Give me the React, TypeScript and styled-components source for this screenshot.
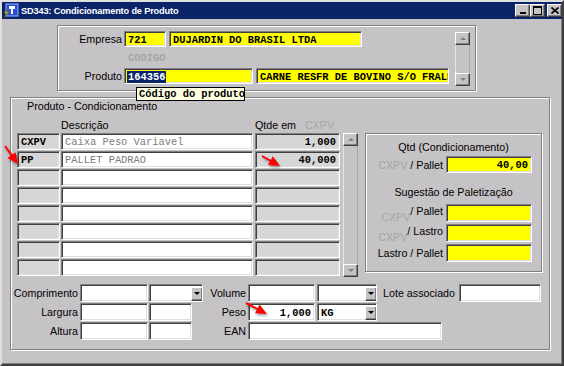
import styled, { createGlobalStyle } from 'styled-components';

const MONO = `"Liberation Mono", "DejaVu Sans Mono", monospace`;
const FACE = '#c6c3c6';

const GlobalStyle = createGlobalStyle`
  html, body { margin: 0; padding: 0; background: ${FACE}; }
  body { font-family: "Liberation Sans", Arial, sans-serif; font-size: 10.7px; color: #000; }
  * { box-sizing: border-box; }
`;

const Window = styled.div`
  width: 564px;
  height: 366px;
  background: ${FACE};
  border: 2px solid;
  border-color: #dfdfdf #404040 #404040 #dfdfdf;
  box-shadow: inset -1px -1px 0 #808080;
  display: flex;
  flex-direction: column;
  position: relative;
  overflow: hidden;
`;

const TitleBar = styled.div`
  height: 17px;
  background: #0a246a;
  color: #fff;
  display: flex;
  align-items: center;
  padding: 0 0 0 1px;
  font-weight: bold;
  font-size: 9.2px;
  letter-spacing: -0.15px;
`;

const TitleText = styled.span`
  margin-left: 2px;
  flex: 1;
  white-space: nowrap;
`;

const CaptionBtn = styled.div<{ $gap?: number }>`
  width: 15px;
  height: 13px;
  margin-left: ${p => p.$gap ?? 0}px;
  background: ${FACE};
  border: 1px solid;
  border-color: #fff #404040 #404040 #fff;
  box-shadow: inset -1px -1px 0 #808080;
  display: flex;
  align-items: center;
  justify-content: center;
`;

const Body = styled.div`
  flex: 1;
  padding-top: 6px;
`;

const etched = `
  border: 1px solid #808080;
  box-shadow: inset 1px 1px 0 #fff, 1px 1px 0 #fff;
`;

const TopPanel = styled.div`
  position: relative;
  margin-left: 55px;
  width: 419px;
  height: 66px;
  ${etched}
  display: flex;
  padding-top: 5px;
`;

const TopGrid = styled.div`
  width: 391px;
  display: flex;
  flex-direction: column;
`;

const FormRow = styled.div<{ $h: number }>`
  display: flex;
  align-items: center;
  height: ${p => p.$h}px;
`;

const Label = styled.span<{ $w: number; $pr?: number; $align?: string }>`
  width: ${p => p.$w}px;
  padding-right: ${p => p.$pr ?? 2}px;
  text-align: ${p => p.$align ?? 'right'};
  white-space: nowrap;
`;

const Hint = styled.span<{ $ml: number }>`
  margin-left: ${p => p.$ml}px;
  font-family: ${MONO};
  font-weight: bold;
  font-size: 10.4px;
  color: #a5a5a5;
`;

const Field = styled.div<{ $w: number; $h?: number; $bg?: string; $right?: boolean; $muted?: boolean; $ml?: number }>`
  width: ${p => p.$w}px;
  height: ${p => (p.$h ? `${p.$h}px` : '100%')};
  margin-left: ${p => p.$ml ?? 0}px;
  background: ${p => p.$bg ?? '#fff'};
  border: 1px solid;
  border-color: #808080 #fff #fff #808080;
  box-shadow: inset 1px 1px 0 #404040, inset -1px -1px 0 #dfdfdf;
  display: flex;
  align-items: center;
  justify-content: ${p => (p.$right ? 'flex-end' : 'flex-start')};
  padding: 1px 3px 0 3px;
  font-family: ${MONO};
  font-weight: ${p => (p.$muted ? 'normal' : 'bold')};
  font-size: 10.4px;
  color: ${p => (p.$muted ? '#7b7b7b' : '#000')};
  white-space: nowrap;
  overflow: hidden;
`;

const Selected = styled.span`
  background: #0a246a;
  color: #fff;
  margin-left: -1px;
  padding: 0 1px;
`;

const Tooltip = styled.div`
  position: absolute;
  left: 78px;
  top: 61px;
  width: 109px;
  height: 14px;
  background: #ffffe1;
  border: 1px solid #000;
  font-family: ${MONO};
  font-weight: bold;
  font-size: 10.4px;
  line-height: 12px;
  padding-left: 2px;
  white-space: nowrap;
  z-index: 2;
`;

const VScroll = styled.div<{ $h: number; $ml: number; $mt?: number }>`
  width: 15px;
  height: ${p => p.$h}px;
  margin-left: ${p => p.$ml}px;
  margin-top: ${p => p.$mt ?? 0}px;
  display: flex;
  flex-direction: column;
  justify-content: space-between;
  border-left: 1px solid #e6e6e6;
  border-right: 1px solid #a8a8a8;
`;

const ScrollBtn = styled.div`
  width: 15px;
  height: 13px;
  margin-left: -1px;
  background: ${FACE};
  border: 1px solid;
  border-color: #fff #404040 #404040 #fff;
  box-shadow: inset -1px -1px 0 #808080;
  display: flex;
  align-items: center;
  justify-content: center;
`;

const Tri = styled.span<{ $up?: boolean; $c: string; $s?: number }>`
  width: 0;
  height: 0;
  border-left: ${p => p.$s ?? 3}px solid transparent;
  border-right: ${p => p.$s ?? 3}px solid transparent;
  ${p =>
    p.$up
      ? `border-bottom: ${p.$s ?? 3}px solid ${p.$c};`
      : `border-top: ${p.$s ?? 3}px solid ${p.$c};`}
`;

const LowerPanel = styled.div`
  margin: 6px 0 0 8px;
  width: 540px;
  height: 253px;
  ${etched}
`;

const PanelCaption = styled.div`
  margin-top: 1px;
  padding-left: 16px;
  height: 14px;
  line-height: 14px;
`;

const Middle = styled.div`
  display: flex;
  margin-top: 5px;
  padding-left: 6px;
`;

const TableBlock = styled.div`
  display: flex;
  flex-direction: column;
`;

const Header = styled.div`
  height: 15px;
  display: flex;
  align-items: flex-start;
  line-height: 14px;
`;

const HeadCell = styled.span<{ $w: number; $ml: number }>`
  width: ${p => p.$w}px;
  margin-left: ${p => p.$ml}px;
  white-space: nowrap;
`;

const Dim = styled.span`
  color: #a5a5a5;
`;

const TableBody = styled.div`
  display: flex;
`;

const Rows = styled.div`
  display: flex;
  flex-direction: column;
  gap: 1px;
`;

const TableRow = styled.div`
  display: flex;
  height: 17px;
`;

const RightBox = styled.div`
  margin: 15px 0 0 7px;
  width: 177px;
  height: 139px;
  ${etched}
  display: flex;
  flex-direction: column;
  align-items: center;
`;

const BoxTitle = styled.div<{ $mt: number }>`
  margin-top: ${p => p.$mt}px;
  height: 14px;
  line-height: 14px;
  white-space: nowrap;
`;

const BoxRow = styled.div<{ $mt: number; $h: number }>`
  align-self: stretch;
  display: flex;
  height: ${p => p.$h}px;
  margin-top: ${p => p.$mt}px;
`;

const BoxLabel = styled.div<{ $low?: boolean }>`
  width: 80px;
  padding-right: 3px;
  display: flex;
  justify-content: flex-end;
  align-items: ${p => (p.$low ? 'flex-start' : 'center')};
  padding-top: ${p => (p.$low ? 1 : 0)}px;
  white-space: nowrap;
`;

const SubDim = styled.span<{ $drop: number }>`
  color: #a5a5a5;
  position: relative;
  top: ${p => p.$drop}px;
`;

const BottomForm = styled.div`
  margin-top: 7px;
  display: grid;
  grid-template-columns: 69px 68px 1px 54px 45px 67px 2px 60px 82px 82px;
  grid-template-rows: repeat(3, 18px);
  row-gap: 1px;
`;

const Cell = styled.div<{ $col: string; $start?: boolean }>`
  grid-column: ${p => p.$col};
  display: flex;
  align-items: center;
  justify-content: ${p => (p.$start ? 'flex-start' : 'flex-end')};
`;

const DropBtn = styled.div`
  margin-left: auto;
  margin-right: -2px;
  width: 12px;
  height: 14px;
  flex: none;
  background: ${FACE};
  border: 1px solid;
  border-color: #fff #404040 #404040 #fff;
  box-shadow: inset -1px -1px 0 #808080;
  display: flex;
  align-items: center;
  justify-content: center;
`;

const Overlay = styled.svg`
  position: absolute;
  left: -2px;
  top: -2px;
  pointer-events: none;
  z-index: 5;
  filter: drop-shadow(1px 2px 1px rgba(0, 0, 0, 0.35));
`;

type Arrow = { sx: number; sy: number; tx: number; ty: number };

const arrows: Arrow[] = [
  { sx: 5, sy: 146, tx: 18, ty: 164 },
  { sx: 262, sy: 156, tx: 280, ty: 166 },
  { sx: 246, sy: 303, tx: 267, ty: 314 },
];

const headPoints = (a: Arrow) => {
  const dx = a.tx - a.sx;
  const dy = a.ty - a.sy;
  const len = Math.hypot(dx, dy);
  const ux = dx / len;
  const uy = dy / len;
  const bx = a.tx - ux * 11;
  const by = a.ty - uy * 11;
  return `${a.tx},${a.ty} ${bx - uy * 5},${by + ux * 5} ${bx + uy * 5},${by - ux * 5}`;
};

const Select = ({ w, text }: { w: number; text?: string }) => (
  <Field $w={w} style={{ paddingRight: 1 }}>
    {text}
    <DropBtn>
      <Tri $c="#000" $s={3} />
    </DropBtn>
  </Field>
);

const Scroll = ({ h, ml, mt }: { h: number; ml: number; mt?: number }) => (
  <VScroll $h={h} $ml={ml} $mt={mt}>
    <ScrollBtn>
      <Tri $up $c="#808080" />
    </ScrollBtn>
    <ScrollBtn>
      <Tri $c="#808080" />
    </ScrollBtn>
  </VScroll>
);

const rows = [
  { code: 'CXPV', desc: 'Caixa Peso Variavel', qty: '1,000' },
  { code: 'PP', desc: 'PALLET PADRAO', qty: '40,000' },
  ...Array.from({ length: 6 }, () => ({ code: '', desc: '', qty: '' })),
];

const AppIcon = () => (
  <svg width="16" height="16" viewBox="0 0 16 16">
    <rect x="3" y="1" width="12" height="12" fill="#2a4fd0" stroke="#9ab0ff" strokeWidth="1" />
    <rect x="6" y="3" width="6" height="3" fill="#fff" />
    <rect x="8" y="6" width="2" height="5" fill="#fff" />
    <path d="M4 6 L1 10 L4 10 L1 15 L6 9 L3 9 Z" fill="#f0d000" stroke="#6a6a00" strokeWidth="0.5" />
  </svg>
);

export default function App() {
  return (
    <>
      <GlobalStyle />
      <Window>
        <TitleBar>
          <AppIcon />
          <TitleText>SD343: Condicionamento de Produto</TitleText>
          <CaptionBtn>
            <svg width="8" height="7">
              <rect x="1" y="5" width="6" height="2" fill="#000" />
            </svg>
          </CaptionBtn>
          <CaptionBtn>
            <svg width="9" height="9">
              <rect x="0.5" y="0.5" width="8" height="8" fill="none" stroke="#000" />
              <rect x="0" y="0" width="9" height="2" fill="#000" />
            </svg>
          </CaptionBtn>
          <CaptionBtn $gap={2}>
            <svg width="8" height="7">
              <path d="M0.5 0.5 L7.5 6.5 M7.5 0.5 L0.5 6.5" stroke="#000" strokeWidth="1.6" />
            </svg>
          </CaptionBtn>
        </TitleBar>

        <Body>
          <TopPanel>
            <TopGrid>
              <FormRow $h={16}>
                <Label $w={66}>Empresa</Label>
                <Field $w={42} $bg="#ffff00">721</Field>
                <Field $w={193} $bg="#ffff00" $ml={3}>DUJARDIN DO BRASIL LTDA</Field>
              </FormRow>
              <FormRow $h={21}>
                <Hint $ml={70}>CODIGO</Hint>
              </FormRow>
              <FormRow $h={16}>
                <Label $w={66}>Produto</Label>
                <Field $w={129} $bg="#ffff00">
                  <Selected>164356</Selected>
                </Field>
                <Field $w={193} $bg="#ffff00" $ml={3}>CARNE RESFR DE BOVINO S/O FRALD</Field>
              </FormRow>
            </TopGrid>
            <Scroll h={54} ml={6} mt={1} />
            <Tooltip>Código do produto</Tooltip>
          </TopPanel>

          <LowerPanel>
            <PanelCaption>Produto - Condicionamento</PanelCaption>
            <Middle>
              <TableBlock>
                <Header>
                  <HeadCell $w={192} $ml={44}>Descrição</HeadCell>
                  <HeadCell $w={85} $ml={2}>
                    Qtde em&nbsp;&nbsp; <Dim>CXPV</Dim>
                  </HeadCell>
                </Header>
                <TableBody>
                  <Rows>
                    {rows.map((r, i) => (
                      <TableRow key={i}>
                        <Field $w={43} $bg="#d6d6d6">{r.code}</Field>
                        <Field $w={192} $ml={1} $muted>{r.desc}</Field>
                        <Field $w={85} $ml={2} $bg="#d6d6d6" $right>{r.qty}</Field>
                      </TableRow>
                    ))}
                  </Rows>
                  <Scroll h={144} ml={3} />
                </TableBody>
              </TableBlock>

              <RightBox>
                <BoxTitle $mt={6}>Qtd (Condicionamento)</BoxTitle>
                <BoxRow $mt={2} $h={17}>
                  <BoxLabel>
                    <Dim>CXPV</Dim>&nbsp;/ Pallet
                  </BoxLabel>
                  <Field $w={86} $bg="#ffff00" $right>40,00</Field>
                </BoxRow>
                <BoxTitle $mt={12}>Sugestão de Paletização</BoxTitle>
                <BoxRow $mt={5} $h={18}>
                  <BoxLabel $low>
                    <SubDim $drop={6}>CXPV</SubDim>/ Pallet
                  </BoxLabel>
                  <Field $w={86} $bg="#ffff00" />
                </BoxRow>
                <BoxRow $mt={2} $h={18}>
                  <BoxLabel $low>
                    <SubDim $drop={6}>CXPV</SubDim>/ Lastro
                  </BoxLabel>
                  <Field $w={86} $bg="#ffff00" />
                </BoxRow>
                <BoxRow $mt={2} $h={18}>
                  <BoxLabel>Lastro / Pallet</BoxLabel>
                  <Field $w={86} $bg="#ffff00" />
                </BoxRow>
              </RightBox>
            </Middle>

            <BottomForm>
              <Cell $col="1"><Label $w={69}>Comprimento</Label></Cell>
              <Cell $col="2"><Field $w={68} /></Cell>
              <Cell $col="4"><Select w={54} /></Cell>
              <Cell $col="5"><Label $w={45}>Volume</Label></Cell>
              <Cell $col="6"><Field $w={67} /></Cell>
              <Cell $col="8"><Select w={60} /></Cell>
              <Cell $col="9"><Label $w={82} $pr={4}>Lote associado</Label></Cell>
              <Cell $col="10"><Field $w={82} /></Cell>

              <Cell $col="1"><Label $w={69}>Largura</Label></Cell>
              <Cell $col="2"><Field $w={68} /></Cell>
              <Cell $col="4" $start><Field $w={43} /></Cell>
              <Cell $col="5"><Label $w={45}>Peso</Label></Cell>
              <Cell $col="6"><Field $w={67} $right>1,000</Field></Cell>
              <Cell $col="8"><Select w={60} text="KG" /></Cell>

              <Cell $col="1"><Label $w={69}>Altura</Label></Cell>
              <Cell $col="2"><Field $w={68} /></Cell>
              <Cell $col="4" $start><Field $w={43} /></Cell>
              <Cell $col="5"><Label $w={45}>EAN</Label></Cell>
              <Cell $col="6 / span 4" $start><Field $w={194} /></Cell>
            </BottomForm>
          </LowerPanel>
        </Body>

        <Overlay width="564" height="366">
          {arrows.map((a, i) => {
            const dx = a.tx - a.sx;
            const dy = a.ty - a.sy;
            const len = Math.hypot(dx, dy);
            return (
              <g key={i}>
                <line
                  x1={a.sx}
                  y1={a.sy}
                  x2={a.tx - (dx / len) * 9}
                  y2={a.ty - (dy / len) * 9}
                  stroke="#f00"
                  strokeWidth="2"
                />
                <polygon points={headPoints(a)} fill="#f00" />
              </g>
            );
          })}
        </Overlay>
      </Window>
    </>
  );
}
